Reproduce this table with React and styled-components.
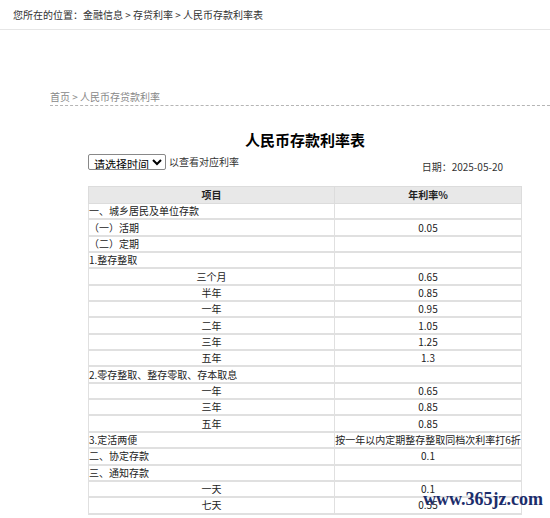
import styled, { createGlobalStyle } from "styled-components";

const GlobalStyle = createGlobalStyle`
  body {
    margin: 0;
    background: #fff;
    font-family: "Noto Sans CJK SC", "Noto Sans", sans-serif;
    color: #333;
  }
`;

const rows = [
  { name: "一、城乡居民及单位存款", rate: "" },
  { name: "（一）活期", rate: "0.05" },
  { name: "（二）定期", rate: "" },
  { name: "1.整存整取", rate: "" },
  { name: "三个月", rate: "0.65", center: true },
  { name: "半年", rate: "0.85", center: true },
  { name: "一年", rate: "0.95", center: true },
  { name: "二年", rate: "1.05", center: true },
  { name: "三年", rate: "1.25", center: true },
  { name: "五年", rate: "1.3", center: true },
  { name: "2.零存整取、整存零取、存本取息", rate: "" },
  { name: "一年", rate: "0.65", center: true },
  { name: "三年", rate: "0.85", center: true },
  { name: "五年", rate: "0.85", center: true },
  { name: "3.定活两便", rate: "按一年以内定期整存整取同档次利率打6折" },
  { name: "二、协定存款", rate: "0.1" },
  { name: "三、通知存款", rate: "" },
  { name: "一天", rate: "0.1", center: true },
  { name: "七天", rate: "0.55", center: true },
];

function App() {
  return (
    <Page>
      <GlobalStyle />
      <TopBar>您所在的位置：金融信息 &gt; 存贷利率 &gt; 人民币存款利率表</TopBar>
      <Crumb>首页 &gt; 人民币存贷款利率</Crumb>
      <Main>
        <Title>人民币存款利率表</Title>
        <Toolbar>
          <Picker>
            <Select defaultValue="">
              <option value="">请选择时间</option>
            </Select>
            <Hint>以查看对应利率</Hint>
          </Picker>
          <DateText>日期：2025-05-20</DateText>
        </Toolbar>
        <Table>
          <thead>
            <tr>
              <Th>项目</Th>
              <Th $wide>年利率%</Th>
            </tr>
          </thead>
          <tbody>
            {rows.map((r, idx) => (
              <tr key={idx}>
                <Td $center={r.center}>{r.name}</Td>
                <Td $center>{r.rate}</Td>
              </tr>
            ))}
          </tbody>
        </Table>
      </Main>
      <Watermark>www.365jz.com</Watermark>
    </Page>
  );
}

const Page = styled.div`
  position: relative;
  width: 550px;
  height: 518px;
  overflow: hidden;
`;
const TopBar = styled.div`
  height: 30px;
  box-sizing: border-box;
  padding: 7px 13px 0;
  font-size: 10px;
  line-height: 16px;
  color: #333;
  border-bottom: 1px solid #e6e6e6;
`;
const Crumb = styled.div`
  margin: 59px 0 0 50px;
  padding-bottom: 1px;
  font-size: 10px;
  line-height: 15px;
  color: #888;
  border-bottom: 1px dashed #b5b5b5;
`;
const Main = styled.div`
  margin-left: 88px;
  width: 434px;
`;
const Title = styled.h1`
  margin: 23px 0 0;
  text-align: center;
  font-size: 15px;
  line-height: 22px;
  font-weight: 700;
  color: #000;
`;
const Toolbar = styled.div`
  display: flex;
  justify-content: space-between;
  align-items: flex-end;
  margin-top: 3px;
  padding-right: 19px;
`;
const Picker = styled.div`
  display: flex;
  align-items: center;
  gap: 3px;
`;
const Select = styled.select`
  height: 16px;
  padding: 0 0 0 1px;
  font-family: inherit;
  font-size: 11px;
  color: #000;
  border: 1px solid #888;
  border-radius: 2px;
  background: #fff;
`;
const Hint = styled.span`
  font-size: 10px;
  line-height: 16px;
  color: #333;
`;
const DateText = styled.span`
  font-size: 10px;
  line-height: 14px;
  color: #333;
  margin-bottom: -4px;
`;
const Table = styled.table`
  width: 100%;
  margin-top: 16px;
  border-collapse: collapse;
  font-size: 10px;
  color: #222;
`;
const Th = styled.th`
  height: 16px;
  padding: 0;
  background: #e8e8e8;
  border: 1px solid #dcdcdc;
  font-weight: 700;
  line-height: 14px;
  width: ${(p) => (p.$wide ? "186px" : "auto")};
`;
const Td = styled.td`
  height: 14.35px;
  padding: 0;
  line-height: 14px;
  text-align: ${(p) => (p.$center ? "center" : "left")};
  border: 1px solid #e0e0e0;
  border-bottom-width: 2px;
  white-space: nowrap;
`;
const Watermark = styled.div`
  position: absolute;
  right: 7px;
  bottom: 8px;
  font-family: "Liberation Serif", "DejaVu Serif", serif;
  font-size: 18px;
  font-weight: 700;
  color: #1b2d6b;
`;

export default App;
